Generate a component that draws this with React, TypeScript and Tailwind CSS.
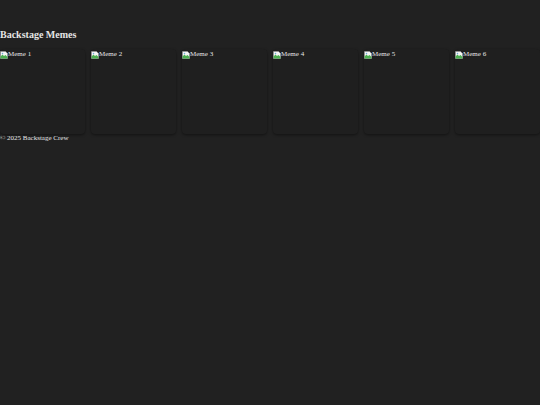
import React from "react";

const memes = ["Meme 1", "Meme 2", "Meme 3", "Meme 4", "Meme 5", "Meme 6"];

function BrokenImage() {
  return (
    <svg width="8" height="8" viewBox="0 0 16 16" className="shrink-0">
      <path d="M1 1h10l4 4v10H1z" fill="#f4f4f4" stroke="#9a9a9a" strokeWidth="1" />
      <path d="M1 11l4-4 3 3 3-2 4 4v3H1z" fill="#4caf50" />
      <circle cx="5" cy="5" r="1.5" fill="#6fa8dc" />
    </svg>
  );
}

export default function App() {
  return (
    <div className="min-h-screen bg-[#212121] text-[#e6e6e6] font-['Liberation_Serif',serif]">
      {/* Header */}
      <header className="pt-[29px] pb-[8px]">
        <h1 className="text-[10px] leading-[12px] font-bold">Backstage Memes</h1>
      </header>
      {/* Gallery */}
      <section className="grid grid-cols-6 gap-[6px]">
        {memes.map((m) => (
          <div
            key={m}
            className="h-[85px] rounded-[4px] bg-[#1f1f1f] shadow-[0_1px_3px_rgba(0,0,0,0.45)]"
          >
            <div className="flex items-center pt-[1px] text-[7px] leading-[9px]">
              <BrokenImage />
              <span>{m}</span>
            </div>
          </div>
        ))}
      </section>
      {/* Footer */}
      <footer className="text-[7px] leading-[9px]">© 2025 Backstage Crew</footer>
    </div>
  );
}
